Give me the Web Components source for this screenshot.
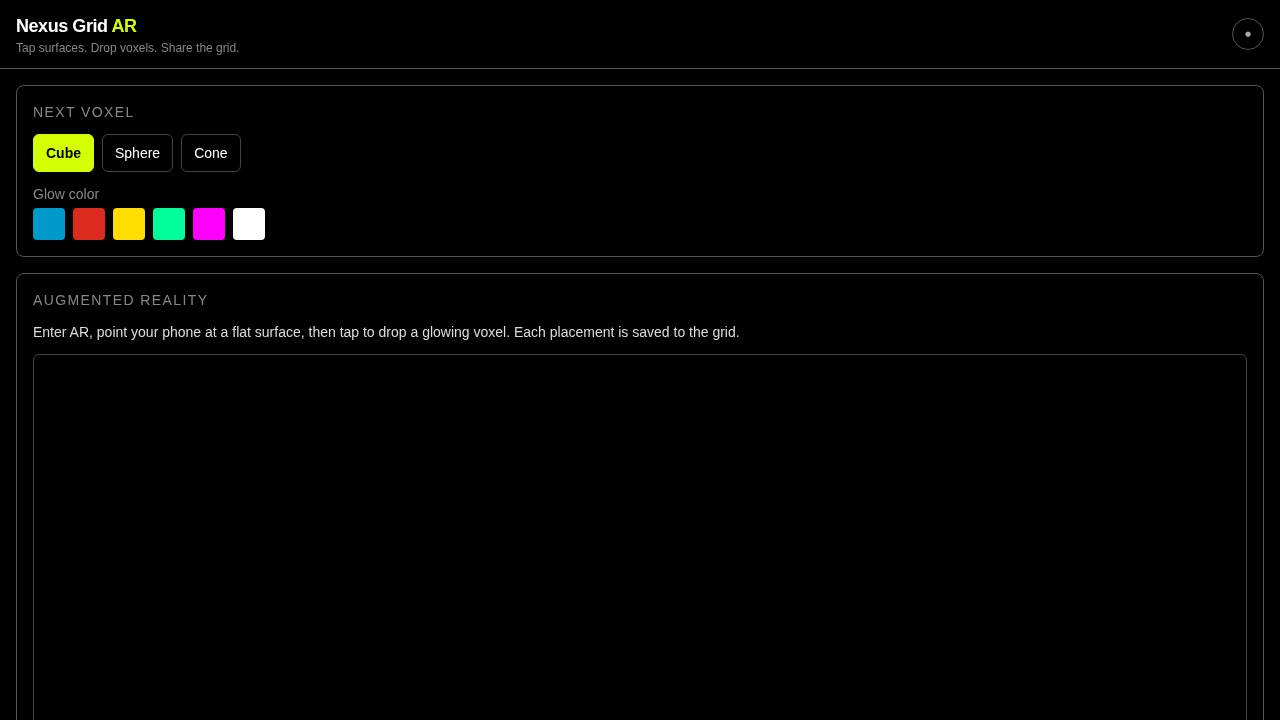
<!DOCTYPE html>
<html lang="en">
<head>
<meta charset="utf-8">
<title>Nexus Grid AR</title>
<style>
  html, body { margin: 0; background: #000; color: #fff; font-family: "Liberation Sans", Arial, sans-serif; }
</style>
</head>
<body>
<nexus-app></nexus-app>

<template id="header-tpl">
  <style>
    :host { display: flex; align-items: center; justify-content: space-between; padding: 16px; border-bottom: 1px solid #555; height: 36px; }
    .brand { padding-top: 2px; }
    h1 { margin: 0; font-size: 18px; line-height: 21px; font-weight: 700; letter-spacing: -0.45px; color: #fff; }
    h1 span { color: #d4ff00; }
    p { margin: 4px 0 0; font-size: 12px; line-height: 14px; color: #888; }
    button { width: 32px; height: 32px; padding: 0; border-radius: 50%; border: 1px solid #555; background: transparent; color: #aaa; font: 400 7px "DejaVu Sans", sans-serif; display: flex; align-items: center; justify-content: center; }
  </style>
  <div class="brand">
    <h1>Nexus Grid <span>AR</span></h1>
    <p>Tap surfaces. Drop voxels. Share the grid.</p>
  </div>
  <button aria-label="Status">●</button>
</template>

<template id="panel-tpl">
  <style>
    :host { display: block; border: 1px solid #555; border-radius: 8px; padding: 16px; }
    h2 { margin: 0 0 12px; font-size: 14px; line-height: 20px; font-weight: 400; letter-spacing: 1.4px; text-transform: uppercase; color: #888; }
  </style>
  <h2></h2>
  <slot></slot>
</template>

<template id="shape-tpl">
  <style>
    :host { display: inline-block; }
    button { display: block; height: 38px; padding: 0 12px; font: 400 14px "Liberation Sans", Arial, sans-serif; color: #fff; background: transparent; border: 1px solid #444; border-radius: 6px; }
    :host([selected]) button { background: #d4ff00; border-color: #d4ff00; color: #000; font-weight: 700; }
  </style>
  <button><slot></slot></button>
</template>

<template id="swatch-tpl">
  <style>
    :host { display: block; width: 32px; height: 32px; border-radius: 4px; background: var(--swatch); }
  </style>
</template>

<template id="app-tpl">
  <style>
    :host { display: block; height: 720px; overflow: hidden; will-change: transform; }
    main { display: flex; flex-direction: column; gap: 16px; padding: 16px; }
    .shapes { display: flex; gap: 8px; }
    .label { margin: 14px 0 6px; font-size: 14px; line-height: 16px; color: #888; }
    .swatches { display: flex; gap: 8px; }
    .intro { margin: 0 0 12px; font-size: 14px; line-height: 20px; color: #ddd; }
    .viewport { height: 480px; border: 1px solid #444; border-radius: 6px; background: #000; }
  </style>
  <nexus-header></nexus-header>
  <main>
    <nexus-panel heading="Next voxel">
      <div class="shapes">
        <shape-button selected>Cube</shape-button>
        <shape-button>Sphere</shape-button>
        <shape-button>Cone</shape-button>
      </div>
      <div class="label">Glow color</div>
      <div class="swatches">
        <color-swatch color="#0099cc"></color-swatch>
        <color-swatch color="#dd2a1e"></color-swatch>
        <color-swatch color="#ffdd00"></color-swatch>
        <color-swatch color="#00ff99"></color-swatch>
        <color-swatch color="#ff00ff"></color-swatch>
        <color-swatch color="#ffffff"></color-swatch>
      </div>
    </nexus-panel>
    <nexus-panel heading="Augmented reality">
      <p class="intro">Enter AR, point your phone at a flat surface, then tap to drop a glowing voxel. Each placement is saved to the grid.</p>
      <div class="viewport"></div>
    </nexus-panel>
  </main>
</template>

<script>
  const stamp = (el, id) => {
    const root = el.attachShadow({mode: 'open'});
    root.append(document.getElementById(id).content.cloneNode(true));
    return root;
  };

  class NexusHeader extends HTMLElement {
    constructor() {
      super();
      stamp(this, 'header-tpl');
    }
  }

  class NexusPanel extends HTMLElement {
    constructor() {
      super();
      stamp(this, 'panel-tpl');
    }
    connectedCallback() {
      this.shadowRoot.querySelector('h2').textContent = this.getAttribute('heading');
    }
  }

  class ShapeButton extends HTMLElement {
    constructor() {
      super();
      stamp(this, 'shape-tpl');
    }
  }

  class ColorSwatch extends HTMLElement {
    constructor() {
      super();
      stamp(this, 'swatch-tpl');
    }
    connectedCallback() {
      this.style.setProperty('--swatch', this.getAttribute('color'));
    }
  }

  class NexusApp extends HTMLElement {
    constructor() {
      super();
      stamp(this, 'app-tpl');
    }
  }

  customElements.define('nexus-header', NexusHeader);
  customElements.define('nexus-panel', NexusPanel);
  customElements.define('shape-button', ShapeButton);
  customElements.define('color-swatch', ColorSwatch);
  customElements.define('nexus-app', NexusApp);
</script>
</body>
</html>
